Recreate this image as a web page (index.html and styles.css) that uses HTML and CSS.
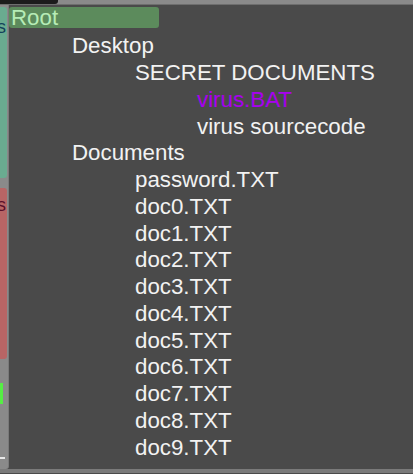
FILE: index.html
```html
<!DOCTYPE html>
<html>
<head>
<meta charset="utf-8">
<link rel="stylesheet" href="styles.css">
</head>
<body>
<div class="topbar"><div class="tab"></div></div>
<div class="main">
  <div class="sidebar">
    <div class="card teal"><span class="lbl">s</span></div>
    <div class="card red"><span class="lbl">s</span></div>
    <div class="meter"></div>
    <div class="dash"></div>
  </div>
  <div class="tree">
    <div class="row l0"><span class="root">Root</span></div>
    <div class="row l1">Desktop</div>
    <div class="row l2">SECRET DOCUMENTS</div>
    <div class="row l3 virus">virus.BAT</div>
    <div class="row l3">virus sourcecode</div>
    <div class="row l1">Documents</div>
    <div class="row l2">password.TXT</div>
    <div class="row l2">doc0.TXT</div>
    <div class="row l2">doc1.TXT</div>
    <div class="row l2">doc2.TXT</div>
    <div class="row l2">doc3.TXT</div>
    <div class="row l2">doc4.TXT</div>
    <div class="row l2">doc5.TXT</div>
    <div class="row l2">doc6.TXT</div>
    <div class="row l2">doc7.TXT</div>
    <div class="row l2">doc8.TXT</div>
    <div class="row l2">doc9.TXT</div>
  </div>
</div>
<div class="bottombar"></div>
</body>
</html>
```
FILE: styles.css
```css
* { box-sizing: border-box; }
html, body {
  margin: 0;
  padding: 0;
  width: 413px;
  height: 474px;
  overflow: hidden;
  background: #4a4a4a;
  font-family: "Liberation Sans", Arial, sans-serif;
}
.topbar {
  height: 5px;
  background: #8a8a8a;
  border-bottom: 1px solid #6e6e6e;
}
.tab {
  width: 58px;
  height: 4px;
  background: #1c1c1c;
  border-bottom-right-radius: 3px;
}
.main {
  display: flex;
  height: 464px;
}
.sidebar {
  width: 9px;
  background: #8a8a8a;
  border-right: 1px solid #7a7a7a;
  border-bottom-right-radius: 3px;
  padding-top: 2px;
  display: flex;
  flex-direction: column;
  flex-shrink: 0;
}
.card {
  width: 7px;
  border-bottom-right-radius: 3px;
  border-top-right-radius: 3px;
  overflow: hidden;
  position: relative;
}
.teal { height: 171px; background: #6aab90; }
.red { height: 171px; margin-top: 10px; background: #b86565; }
.lbl {
  position: absolute;
  right: 1px;
  font-size: 18px;
  line-height: 18px;
}
.teal .lbl { top: 11px; color: #13415a; }
.red .lbl { top: 8px; color: #5a0f2a; }
.meter {
  width: 3px;
  height: 21px;
  margin-top: 24px;
  background: #55ee44;
}
.dash {
  width: 5px;
  height: 2px;
  margin-top: 53px;
  background: #e8e8e8;
}
.tree {
  flex: 1;
  padding-top: 0;
  color: #f2f2f2;
  font-size: 22.3px;
}
.row {
  height: 26.75px;
  line-height: 26.75px;
  white-space: nowrap;
}
.l0 { padding-left: 0; }
.l1 { padding-left: 63px; }
.l2 { padding-left: 126px; }
.l3 { padding-left: 188px; }
.virus { color: #a800f0; }
.root {
  display: block;
  width: 150px;
  height: 21px;
  margin-top: 1.5px;
  line-height: 21px;
  padding-left: 2px;
  background: #5c8b5c;
  border-radius: 3px;
  color: #b6ecb6;
}
.bottombar {
  height: 4px;
  background: #7a7a7a;
}
```
